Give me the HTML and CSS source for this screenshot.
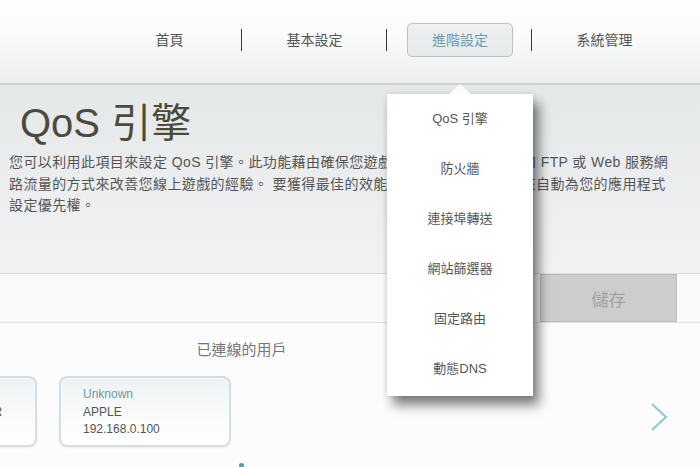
FILE: index.html
```html
<!DOCTYPE html>
<html lang="zh-Hant">
<head>
<meta charset="utf-8">
<title>QoS 引擎</title>
<link rel="stylesheet" href="styles.css">
</head>
<body>
<div class="page">
  <header class="topnav">
    <ul class="menu">
      <li class="menu-item"><span class="menu-label">首頁</span></li>
      <li class="menu-item"><span class="menu-label">基本設定</span></li>
      <li class="menu-item"><span class="menu-label menu-label-active">進階設定</span></li>
      <li class="menu-item"><span class="menu-label">系統管理</span></li>
    </ul>
  </header>

  <section class="intro">
    <h1 class="intro-title">QoS 引擎</h1>
    <p class="intro-text">
      <span class="intro-line">您可以利用此項目來設定 QoS 引擎。此功能藉由確保您遊戲流量優先於其他服務如 FTP 或 Web 服務網</span>
      <span class="intro-line">路流量的方式來改善您線上遊戲的經驗。 要獲得最佳的效能，請以自動分類選項&nbsp;來自動為您的應用程式</span>
      <span class="intro-line">設定優先權。</span>
    </p>
  </section>

  <div class="actionbar">
    <button class="save-btn" type="button">儲存</button>
  </div>

  <section class="clients">
    <h2 class="clients-title">已連線的用戶</h2>
    <div class="clients-row">
      <div class="card-track">
        <div class="client-card">
          <div class="client-name">Unknown</div>
          <div class="client-info">TP-LINK REPEATER</div>
          <div class="client-info">192.168.0.1</div>
        </div>
        <div class="client-card">
          <div class="client-name">Unknown</div>
          <div class="client-info">APPLE</div>
          <div class="client-info">192.168.0.100</div>
        </div>
      </div>
      <button class="next-btn" type="button" aria-label="下一頁">
        <svg width="18" height="30" viewBox="0 0 18 30"><polyline points="2,2 16,15 2,28" fill="none" stroke="#8dc7d1" stroke-width="2"/></svg>
      </button>
    </div>
    <div class="pager"><span class="pager-dot"></span></div>
  </section>

  <nav class="dropdown">
    <a class="dropdown-item">QoS 引擎</a>
    <a class="dropdown-item">防火牆</a>
    <a class="dropdown-item">連接埠轉送</a>
    <a class="dropdown-item">網站篩選器</a>
    <a class="dropdown-item">固定路由</a>
    <a class="dropdown-item">動態DNS</a>
  </nav>
</div>
</body>
</html>
```

FILE: styles.css
```css
* { box-sizing: border-box; }
html, body { margin: 0; padding: 0; }
body {
  width: 700px;
  height: 467px;
  overflow: hidden;
  background: #fcfcfc;
  font-family: "Liberation Sans", "Noto Sans CJK TC", sans-serif;
  color: #555;
}
.page { position: relative; width: 700px; height: 467px; overflow: hidden; }

/* top navigation */
.topnav {
  height: 85px;
  background: linear-gradient(to bottom, #ffffff 0%, #f9fafa 45%, #eceeef 100%);
  border-bottom: 2px solid #cfd1d2;
}
.menu {
  list-style: none;
  margin: 0;
  padding: 23px 0 0 97px;
  display: flex;
}
.menu-item {
  width: 145px;
  height: 34px;
  display: flex;
  align-items: center;
  justify-content: center;
  position: relative;
}
.menu-item + .menu-item::before {
  content: "";
  position: absolute;
  left: -1px;
  top: 6px;
  width: 1px;
  height: 22px;
  background: #3a3a3a;
}
.menu-label {
  font-size: 14px;
  color: #555;
  line-height: 34px;
}
.menu-label-active {
  width: 106px;
  height: 34px;
  margin-left: 1px;
  text-align: center;
  border: 1px solid #bcbfc1;
  border-radius: 5px;
  background: linear-gradient(to bottom, #eef0f1, #e6e9ea);
  color: #6a9db0;
  line-height: 32px;
}

/* intro */
.intro {
  height: 188px;
  padding: 18px 0 0 0;
  background: linear-gradient(to bottom, #e5e8e9 0%, #eceef0 60%, #f0f2f3 100%);
}
.intro-title {
  margin: 0 0 9px 20px;
  font-size: 40px;
  line-height: 40px;
  font-weight: normal;
  color: #4b4a3b;
}
.intro-text {
  margin: 0 0 0 9px;
  font-size: 14px;
  letter-spacing: 0.4px;
  line-height: 21.5px;
  color: #555;
}
.intro-line { display: block; white-space: nowrap; }

/* action bar */
.actionbar {
  height: 50px;
  border-top: 1px solid #d9dcdd;
  border-bottom: 1px solid #dfe1e2;
  background: #f9fafa;
  display: flex;
}
.save-btn {
  margin-left: 540px;
  width: 137px;
  height: 48px;
  border: 1px solid #bcbcbc;
  background: #cdcdcd;
  color: #a2a2a2;
  font-family: inherit;
  font-size: 17px;
  padding: 0;
}

/* clients */
.clients { padding-top: 17px; }
.clients-title {
  width: 483px;
  margin: 0;
  text-align: center;
  font-size: 15px;
  line-height: 20px;
  font-weight: normal;
  color: #777;
}
.clients-row {
  margin-top: 16px;
  display: flex;
  align-items: flex-start;
  padding-right: 32px;
}
.card-track {
  display: flex;
  gap: 22px;
  margin-left: -135px;
}
.client-card {
  width: 172px;
  height: 71px;
  border: 2px solid #d2dee1;
  border-radius: 8px;
  background: linear-gradient(to bottom, #edf2f3 0%, #f7f9f9 40%, #ffffff 100%);
  box-shadow: inset 0 1px 2px rgba(255,255,255,.8), 0 1px 2px rgba(0,0,0,.06);
  padding: 8px 0 0 22px;
  white-space: nowrap;
  overflow: hidden;
}
.client-name { font-size: 12px; line-height: 17.5px; color: #6a98a7; }
.client-info { font-size: 12px; line-height: 17.5px; color: #555; }
.next-btn {
  margin-left: auto;
  margin-top: 26px;
  padding: 0;
  border: 0;
  background: none;
  width: 18px;
  height: 30px;
}
.next-btn svg { display: block; }
.pager {
  width: 483px;
  display: flex;
  justify-content: center;
  margin-top: 16px;
}
.pager-dot {
  width: 5px;
  height: 5px;
  border-radius: 50%;
  background: #4aa3b5;
}

/* dropdown overlay */
.dropdown {
  position: absolute;
  left: 387px;
  top: 94px;
  width: 146px;
  height: 302px;
  background: #fff;
  box-shadow: 6px 9px 11px rgba(0,0,0,.5), 0 0 5px rgba(0,0,0,.12);
  display: flex;
  flex-direction: column;
}
.dropdown::before {
  content: "";
  position: absolute;
  left: 62px;
  top: -10px;
  border-left: 11px solid transparent;
  border-right: 11px solid transparent;
  border-bottom: 10px solid #fafbfb;
}
.dropdown-item {
  height: 50px;
  line-height: 50px;
  text-align: center;
  font-size: 13px;
  color: #555;
}
```
